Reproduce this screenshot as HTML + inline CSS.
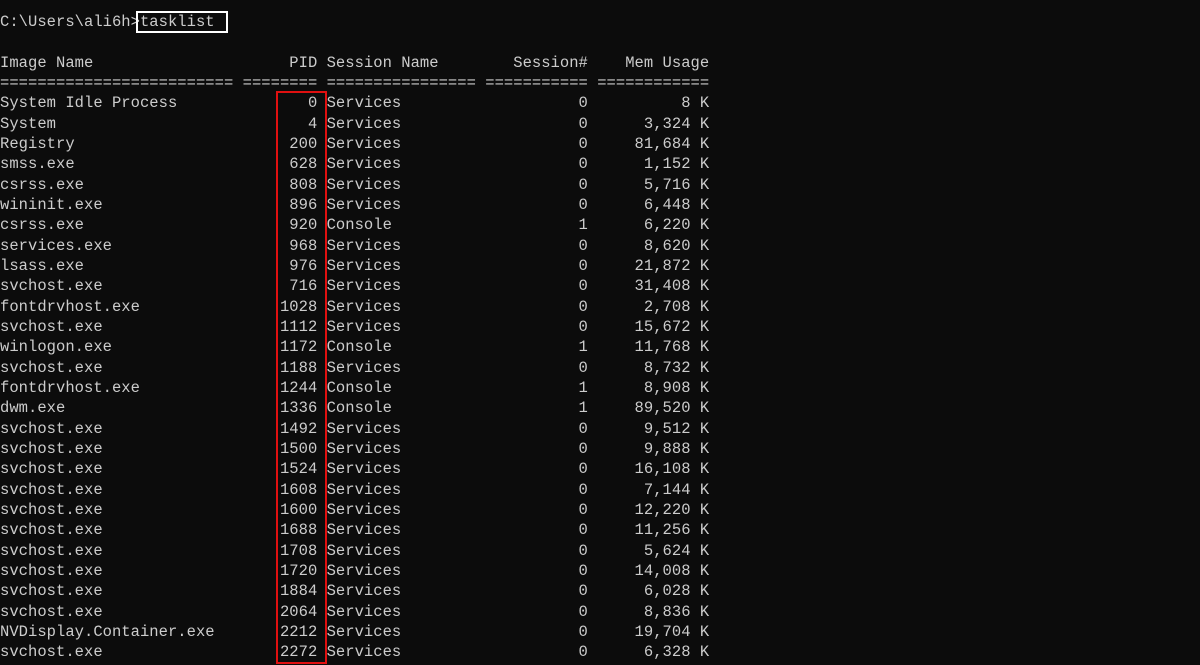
<!DOCTYPE html>
<html><head><meta charset="utf-8"><style>
html,body{margin:0;padding:0;background:#0c0c0c;width:1200px;height:665px;overflow:hidden}
pre{position:absolute;left:0;top:12px;margin:0;font-family:"Liberation Mono",monospace;font-size:15.5px;line-height:20.33px;color:#cccccc;letter-spacing:0.03px}
.w{position:absolute;left:136px;top:11px;width:88px;height:18px;border:2px solid #fff}
.r{position:absolute;left:276px;top:91px;width:47px;height:569px;border:2px solid #e01010}
</style></head><body>
<pre>C:\Users\ali6h>tasklist

Image Name                     PID Session Name        Session#    Mem Usage
========================= ======== ================ =========== ============
System Idle Process              0 Services                   0          8 K
System                           4 Services                   0      3,324 K
Registry                       200 Services                   0     81,684 K
smss.exe                       628 Services                   0      1,152 K
csrss.exe                      808 Services                   0      5,716 K
wininit.exe                    896 Services                   0      6,448 K
csrss.exe                      920 Console                    1      6,220 K
services.exe                   968 Services                   0      8,620 K
lsass.exe                      976 Services                   0     21,872 K
svchost.exe                    716 Services                   0     31,408 K
fontdrvhost.exe               1028 Services                   0      2,708 K
svchost.exe                   1112 Services                   0     15,672 K
winlogon.exe                  1172 Console                    1     11,768 K
svchost.exe                   1188 Services                   0      8,732 K
fontdrvhost.exe               1244 Console                    1      8,908 K
dwm.exe                       1336 Console                    1     89,520 K
svchost.exe                   1492 Services                   0      9,512 K
svchost.exe                   1500 Services                   0      9,888 K
svchost.exe                   1524 Services                   0     16,108 K
svchost.exe                   1608 Services                   0      7,144 K
svchost.exe                   1600 Services                   0     12,220 K
svchost.exe                   1688 Services                   0     11,256 K
svchost.exe                   1708 Services                   0      5,624 K
svchost.exe                   1720 Services                   0     14,008 K
svchost.exe                   1884 Services                   0      6,028 K
svchost.exe                   2064 Services                   0      8,836 K
NVDisplay.Container.exe       2212 Services                   0     19,704 K
svchost.exe                   2272 Services                   0      6,328 K</pre>
<div class="w"></div><div class="r"></div>
</body></html>
